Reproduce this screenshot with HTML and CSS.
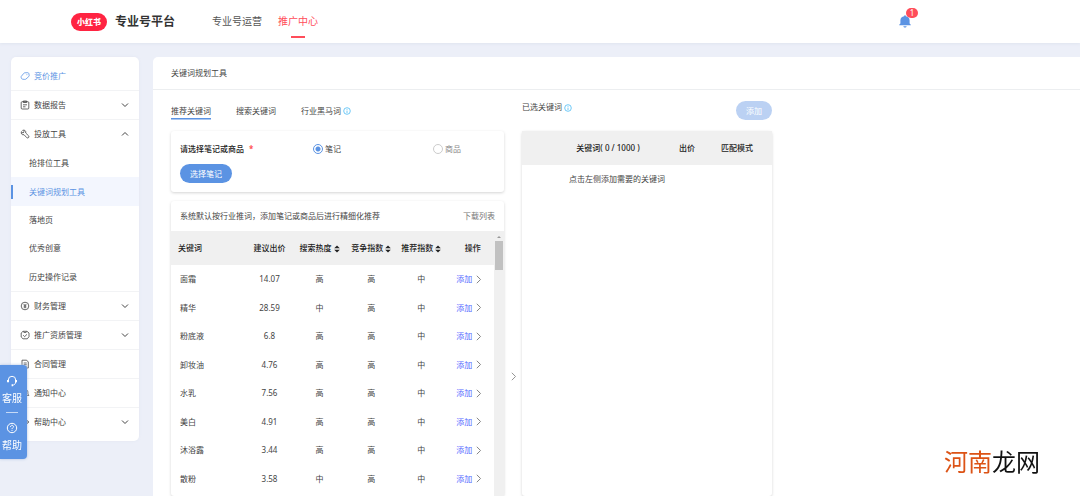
FILE: index.html
```
<!DOCTYPE html>
<html lang="zh-CN">
<head>
<meta charset="utf-8">
<meta name="viewport" content="width=device-width, initial-scale=1">
<title>关键词规划工具</title>
<link rel="stylesheet" href="styles.css">
</head>
<body>
<svg class="sprite" aria-hidden="true">
  <symbol id="down" viewBox="0 0 8 8"><path d="M1 2.500 4 5.500 7 2.500"/></symbol>
  <symbol id="up" viewBox="0 0 8 8"><path d="M1 5.500 4 2.500 7 5.500"/></symbol>
  <symbol id="right" viewBox="0 0 8 8"><path d="M2.500 .7 5.800 4 2.500 7.300"/></symbol>
  <symbol id="info" viewBox="0 0 8 8"><circle cx="4" cy="4" r="3.300"/><path d="M4 3.600V6M4 2v.8"/></symbol>
  <symbol id="sort" viewBox="0 0 6 8"><path class="solid" d="M3 .6 5.800 3.200H.2zM3 7.400.2 4.800h5.600z"/></symbol>
</svg>
<div class="app">
  <header class="topbar">
    <a class="brand" href="#"><span class="logo">小红书</span><span class="brand-name">专业号平台</span></a>
    <nav class="topnav">
      <a href="#">专业号运营</a>
      <a href="#" class="current">推广中心</a>
    </nav>
    <button class="bell" aria-label="通知">
      <svg viewBox="0 0 12 13"><path d="M6 .3c.6 0 .9.4.9.9C9 1.600 10.600 3.100 10.600 5.300v3.200l1.200 1.300v.5H.2v-.5l1.200-1.300V5.300C1.400 3.100 3 1.600 5.100 1.200c0-.5.3-.9.9-.9zM4.300 11.300h3.400c-.2.900-.8 1.300-1.700 1.300s-1.500-.4-1.700-1.300z"/></svg>
      <span class="badge">1</span>
    </button>
  </header>
  <div class="body">
    <nav class="sidebar">
      <a href="#" class="item first"><svg class="icon" viewBox="0 0 10 10"><path d="M1.200 5.500 3.800 2.300Q4.200 1.800 4.800 1.800L7.800 1.700Q8.600 1.700 8.800 2.500L9.200 4.300Q9.300 5 8.800 5.500L6 8Q5.500 8.500 4.800 8.400L2.500 8.200Q1.800 8.100 1.500 7.400L1.100 6.300Q.9 5.900 1.200 5.500z"/><path d="M6.500 3.700h.8"/></svg><span>竞价推广</span></a>
      <a href="#" class="item"><svg class="icon" viewBox="0 0 10 10"><rect x="1.200" y="1.700" width="7.600" height="7.300" rx="1"/><path d="M3.300 1h3.400v1.500H3.300zM3 4.800h4M3 6.800h2.500"/></svg><span>数据报告</span><svg class="chev"><use href="#down"/></svg></a>
      <a href="#" class="item open"><svg class="icon" viewBox="0 0 10 10"><path d="M2.700 1.300 4.200 2.800 3 4.100 1.400 2.700C.7 4.700 2.200 6.200 4 5.700l2.800 3c1.200.9 2.800-.5 1.900-1.800L5.700 4C6.300 2.100 4.600.5 2.700 1.300z"/></svg><span>投放工具</span><svg class="chev"><use href="#up"/></svg></a>
      <div class="submenu">
        <a href="#">抢排位工具</a>
        <a href="#" class="selected">关键词规划工具</a>
        <a href="#">落地页</a>
        <a href="#">优秀创意</a>
        <a href="#">历史操作记录</a>
      </div>
      <a href="#" class="item"><svg class="icon" viewBox="0 0 10 10"><circle cx="5" cy="5" r="3.800"/><path d="M3.700 3 5 4.500 6.300 3M5 4.500V7.300M3.700 4.900h2.600M3.700 6.100h2.600"/></svg><span>财务管理</span><svg class="chev"><use href="#down"/></svg></a>
      <a href="#" class="item"><svg class="icon" viewBox="0 0 10 10"><path d="M3 1.300h4L9 3v3.700L7.300 8.800H3L1.200 7V3zM3.200 1.800 5 2.700l1.800-.9M3.200 5.200l1.400 1.500L7 4.300"/></svg><span>推广资质管理</span><svg class="chev"><use href="#down"/></svg></a>
      <a href="#" class="item"><svg class="icon" viewBox="0 0 10 10"><path d="M2 1.200h4.700L8.300 3v6H2zM3.700 4h3M3.700 5.700h3M5.500 7.300h1.200"/></svg><span>合同管理</span></a>
      <a href="#" class="item"><svg class="icon" viewBox="0 0 10 10"><path d="M1.200 7.500h7.600L7.900 6V4.200C7.900 2.500 6.700 1.300 5 1.300S2.100 2.500 2.100 4.200V6zM4 8.800h2"/></svg><span>通知中心</span></a>
      <a href="#" class="item last"><svg class="icon" viewBox="0 0 10 10"><path d="M1.200 2.500 5 1.200l3.800 3.800L5 8.800 1.200 7.500zM7 5h1.500"/></svg><span>帮助中心</span><svg class="chev"><use href="#down"/></svg></a>
    </nav>
    <main class="panel">
      <h1>关键词规划工具</h1>
      <div class="columns">
        <section class="left">
          <nav class="tabs">
            <a href="#" class="active">推荐关键词</a>
            <a href="#">搜索关键词</a>
            <a href="#">行业黑马词<svg class="info"><use href="#info"/></svg></a>
          </nav>
          <form class="card chooser">
            <div class="choices">
              <strong>请选择笔记或商品 <em>*</em></strong>
              <label><input type="radio" name="kind" checked>笔记</label>
              <label class="muted"><input type="radio" name="kind">商品</label>
            </div>
            <button type="button" class="pill">选择笔记</button>
          </form>
          <div class="card words">
            <div class="hint"><span>系统默认按行业推词，添加笔记或商品后进行精细化推荐</span><a href="#">下载列表</a></div>
            <div class="scroller">
              <table>
                <colgroup><col class="c-word"><col class="c-narrow"><col class="c-wide"><col class="c-wide"><col class="c-narrow"><col class="c-narrow"></colgroup>
                <thead><tr><th>关键词</th><th>建议出价</th><th>搜索热度<svg class="sort"><use href="#sort"/></svg></th><th>竞争指数<svg class="sort"><use href="#sort"/></svg></th><th>推荐指数<svg class="sort"><use href="#sort"/></svg></th><th class="act">操作</th></tr></thead>
                <tbody>
                  <tr><td>面霜</td><td>14.07</td><td>高</td><td>高</td><td>中</td><td><a href="#">添加<svg class="go"><use href="#right"/></svg></a></td></tr>
                  <tr><td>精华</td><td>28.59</td><td>中</td><td>高</td><td>中</td><td><a href="#">添加<svg class="go"><use href="#right"/></svg></a></td></tr>
                  <tr><td>粉底液</td><td>6.8</td><td>高</td><td>高</td><td>中</td><td><a href="#">添加<svg class="go"><use href="#right"/></svg></a></td></tr>
                  <tr><td>卸妆油</td><td>4.76</td><td>高</td><td>高</td><td>中</td><td><a href="#">添加<svg class="go"><use href="#right"/></svg></a></td></tr>
                  <tr><td>水乳</td><td>7.56</td><td>高</td><td>高</td><td>中</td><td><a href="#">添加<svg class="go"><use href="#right"/></svg></a></td></tr>
                  <tr><td>美白</td><td>4.91</td><td>高</td><td>高</td><td>中</td><td><a href="#">添加<svg class="go"><use href="#right"/></svg></a></td></tr>
                  <tr><td>沐浴露</td><td>3.44</td><td>高</td><td>高</td><td>中</td><td><a href="#">添加<svg class="go"><use href="#right"/></svg></a></td></tr>
                  <tr><td>散粉</td><td>3.58</td><td>中</td><td>高</td><td>中</td><td><a href="#">添加<svg class="go"><use href="#right"/></svg></a></td></tr>
                </tbody>
              </table>
              <div class="track"><i class="arrow"></i><i class="thumb"></i></div>
            </div>
          </div>
        </section>
        <div class="divider"><svg><use href="#right"/></svg></div>
        <section class="right">
          <div class="right-head"><span>已选关键词<svg class="info"><use href="#info"/></svg></span><button class="pill off" disabled>添加</button></div>
          <div class="card picked">
            <table>
              <colgroup><col class="p-word"><col class="p-bid"><col class="p-mode"></colgroup>
              <thead><tr><th>关键词( 0 / 1000 )</th><th>出价</th><th>匹配模式</th></tr></thead>
              <tbody><tr><td colspan="3">点击左侧添加需要的关键词</td></tr></tbody>
            </table>
          </div>
        </section>
      </div>
    </main>
  </div>
</div>
<aside class="support">
  <a href="#"><svg viewBox="0 0 12 12"><path d="M2.300 7V5a3.700 3.700 0 0 1 7.400 0v2C9.500 9 8.300 10 6.700 10.200"/><path class="thick" d="M2 5v2.300M10 5v2.300M5.600 10.200h1.400"/></svg>客服</a>
  <hr>
  <a href="#"><svg viewBox="0 0 12 12"><circle cx="6" cy="6" r="4.700"/><path d="M4.500 4.900C4.500 2.800 7.500 2.900 7.500 4.700 7.500 5.800 6 5.800 6 7.100M6 8.100v.9"/></svg>帮助</a>
</aside>
<div class="watermark"><span>河南</span>龙网</div>
</body>
</html>
```
FILE: styles.css
```
* { box-sizing: border-box; }
body {
  margin: 0;
  background: #eceff8;
  color: #444;
  font: 8px/12px "Noto Sans", "Noto Sans CJK SC", sans-serif;
}
a { color: inherit; text-decoration: none; }
button { border: 0; padding: 0; font: inherit; }
svg { fill: none; stroke: currentColor; stroke-width: 0.8; flex: none; }
.sprite { display: none; }
.solid { fill: currentColor; stroke: none; }

.app { display: flex; flex-direction: column; height: 100vh; overflow: hidden; }

.topbar {
  display: flex;
  align-items: center;
  flex: none;
  height: 43px;
  padding: 0 168px 0 71px;
  background: #fff;
  box-shadow: 0 1px 3px #dfe4ef;
}
.brand { display: flex; align-items: center; gap: 8px; color: #333; }
.logo {
  width: 36px;
  border-radius: 9px;
  background: #ff2442;
  color: #fff;
  font-weight: 900;
  line-height: 18px;
  text-align: center;
}
.brand-name { font-size: 12px; font-weight: 700; }
.topnav { display: flex; gap: 16px; margin-left: 37px; font-size: 10px; color: #555; }
.topnav a { line-height: 43px; }
.topnav .current { position: relative; color: #ff4d5a; }
.current::after {
  content: "";
  position: absolute;
  bottom: 5px;
  left: calc(50% - 7px);
  width: 14px;
  height: 2px;
  background: #ff4d5a;
}
.bell { position: relative; width: 14px; height: 14px; margin-left: auto; background: none; color: #5b93e3; }
.bell svg { display: block; width: 12px; height: 13px; margin: 0 auto; fill: currentColor; stroke: none; }
.badge {
  position: absolute;
  top: -7px;
  right: -6px;
  width: 12px;
  border-radius: 5px;
  background: #ff4d5a;
  color: #fff;
  line-height: 10px;
}

.body { display: flex; flex: 1; gap: 14px; min-height: 0; padding: 14px 0 0 11px; }
.sidebar {
  flex: none;
  align-self: flex-start;
  width: 128px;
  border-radius: 5px;
  background: #fff;
  box-shadow: 0 0 3px #e2e6f1;
}
.item {
  display: flex;
  align-items: center;
  gap: 4px;
  height: 29px;
  padding: 0 10px 0 9px;
  border-bottom: 1px solid #f2f3f5;
}
.first { height: 34px; padding-top: 5px; color: #5b93e3; }
.open { border-bottom-color: transparent; }
.last { height: 33px; padding-bottom: 4px; border-bottom-color: transparent; }
.icon { width: 10px; height: 10px; }
.chev { width: 8px; height: 8px; margin-left: auto; stroke-width: 1; }
.submenu { display: grid; grid-auto-rows: 1fr; height: 143px; border-bottom: 1px solid #f2f3f5; }
.submenu a { display: flex; align-items: center; padding-left: 18px; }
.submenu .selected { position: relative; background: #f3f6fe; color: #5b93e3; }
.selected::before {
  content: "";
  position: absolute;
  left: 0;
  width: 2px;
  height: 14px;
  background: #5b93e3;
}

.panel { display: flex; flex-direction: column; flex: 1; min-width: 0; border-radius: 5px 0 0; background: #fff; }
h1 { margin: 0; padding: 10px 18px; border-bottom: 1px solid #eceef0; font-size: 8px; font-weight: 400; line-height: 12px; }
.columns {
  display: grid;
  grid-template-columns: 333fr 18px 250fr 308fr;
  grid-template-rows: minmax(0, 1fr);
  flex: 1;
  min-height: 0;
  padding-left: 18px;
}
.left, .right { display: flex; flex-direction: column; min-width: 0; }
.card { border-radius: 3px; background: #fff; box-shadow: 0 1px 3px #d4d4d4; }
.tabs { display: flex; gap: 25px; height: 41px; padding-top: 14px; }
.tabs a { display: flex; align-items: center; height: 15px; border-bottom: 1px solid transparent; }
.tabs .active { border-bottom-color: #5b93e3; box-shadow: 0 1px #a9c6f1; }
.info { width: 8px; height: 8px; margin-left: 2px; color: #4dbcf5; vertical-align: middle; }

.chooser { height: 61px; padding: 9px; }
.choices { display: grid; grid-template-columns: 133fr 120fr 62fr; align-items: center; height: 18px; }
.choices strong { font-weight: 500; color: #222; }
em { margin-left: 3px; color: #f33; font-style: normal; }
.choices label { display: flex; align-items: center; gap: 2px; }
.muted { color: #888; }
input {
  appearance: none;
  width: 10px;
  height: 10px;
  margin: 0;
  border: 1px solid #ccc;
  border-radius: 50%;
}
input:checked { border-color: #5b93e3; background: radial-gradient(#5b93e3 2px, #fff 3px); }
.pill {
  display: block;
  width: 52px;
  margin-top: 6px;
  border-radius: 10px;
  background: #5b93e3;
  color: #fff;
  line-height: 19px;
}
.pill.off { width: 36px; margin: 0; background: #bbd1f3; }

.words { display: flex; flex-direction: column; flex: 1; min-height: 0; margin-top: 9px; overflow: clip; overflow-clip-margin: 3px; }
.hint { display: flex; flex: none; align-items: center; justify-content: space-between; height: 30px; padding: 0 9px; }
.hint a { color: #777; }
.scroller { display: flex; flex: 1; min-height: 0; overflow: hidden; }
table { width: 100%; border-collapse: collapse; table-layout: fixed; align-self: flex-start; }
th { height: 34px; padding: 0; background: #f0f0f0; font-weight: 500; color: #222; white-space: nowrap; }
td { height: 28px; padding: 0; text-align: center; }
tr:nth-child(even) td { height: 29px; }
.c-word { width: 23%; }
.c-narrow { width: 15%; }
.c-wide { width: 16%; }
.words th:first-child { padding-left: 7px; text-align: left; }
.words td:first-child { padding-left: 9px; text-align: left; }
.words .act { padding-left: 6px; }
.words td a { display: flex; align-items: center; justify-content: center; gap: 2px; color: #5468ff; }
.sort { width: 6px; height: 8px; margin-left: 2px; vertical-align: middle; }
.go { width: 9px; height: 9px; color: #777; }
.track {
  display: flex;
  flex: none;
  flex-direction: column;
  align-items: center;
  gap: 3px;
  width: 10px;
  padding-top: 5px;
  background: #f0f0f0;
}
.arrow { border: 2px solid transparent; border-top: 0; border-bottom: 2px solid #999; }
.thumb { width: 8px; height: 29px; background: #c1c1c1; }

.divider { display: flex; align-items: center; justify-content: center; padding-top: 166px; color: #888; }
.divider svg { width: 9px; height: 9px; }
.right-head { display: flex; flex: none; align-items: flex-start; justify-content: space-between; height: 41px; padding-top: 11px; }
.picked { flex: 1; min-height: 0; overflow: clip; overflow-clip-margin: 3px; }
.p-word { width: 60%; }
.p-bid { width: 12%; }
.p-mode { width: 28%; }
.picked th:first-child { padding-left: 22px; }
.picked td { padding-right: 60px; }

.support {
  position: fixed;
  top: 365px;
  left: 0;
  display: flex;
  flex-direction: column;
  align-items: center;
  width: 27px;
  padding: 10px 3px 5px 0;
  border-radius: 0 4px 4px 0;
  background: #5b93e3;
  box-shadow: 0 0 3px #aabfdf;
  color: #fff;
  font-size: 10px;
  line-height: 18px;
}
.support a { display: flex; flex-direction: column; align-items: center; gap: 2px; }
.support svg { width: 12px; height: 12px; stroke-width: 1; }
.support .thick { stroke-width: 2; }
.support hr { width: 12px; margin: 5px 0 9px; border: 0; border-top: 1px solid #c5d9f6; }
.watermark { position: fixed; right: 40px; bottom: 20px; color: #111; font-size: 24px; line-height: 28px; }
.watermark span { color: #dc5316; }
```
